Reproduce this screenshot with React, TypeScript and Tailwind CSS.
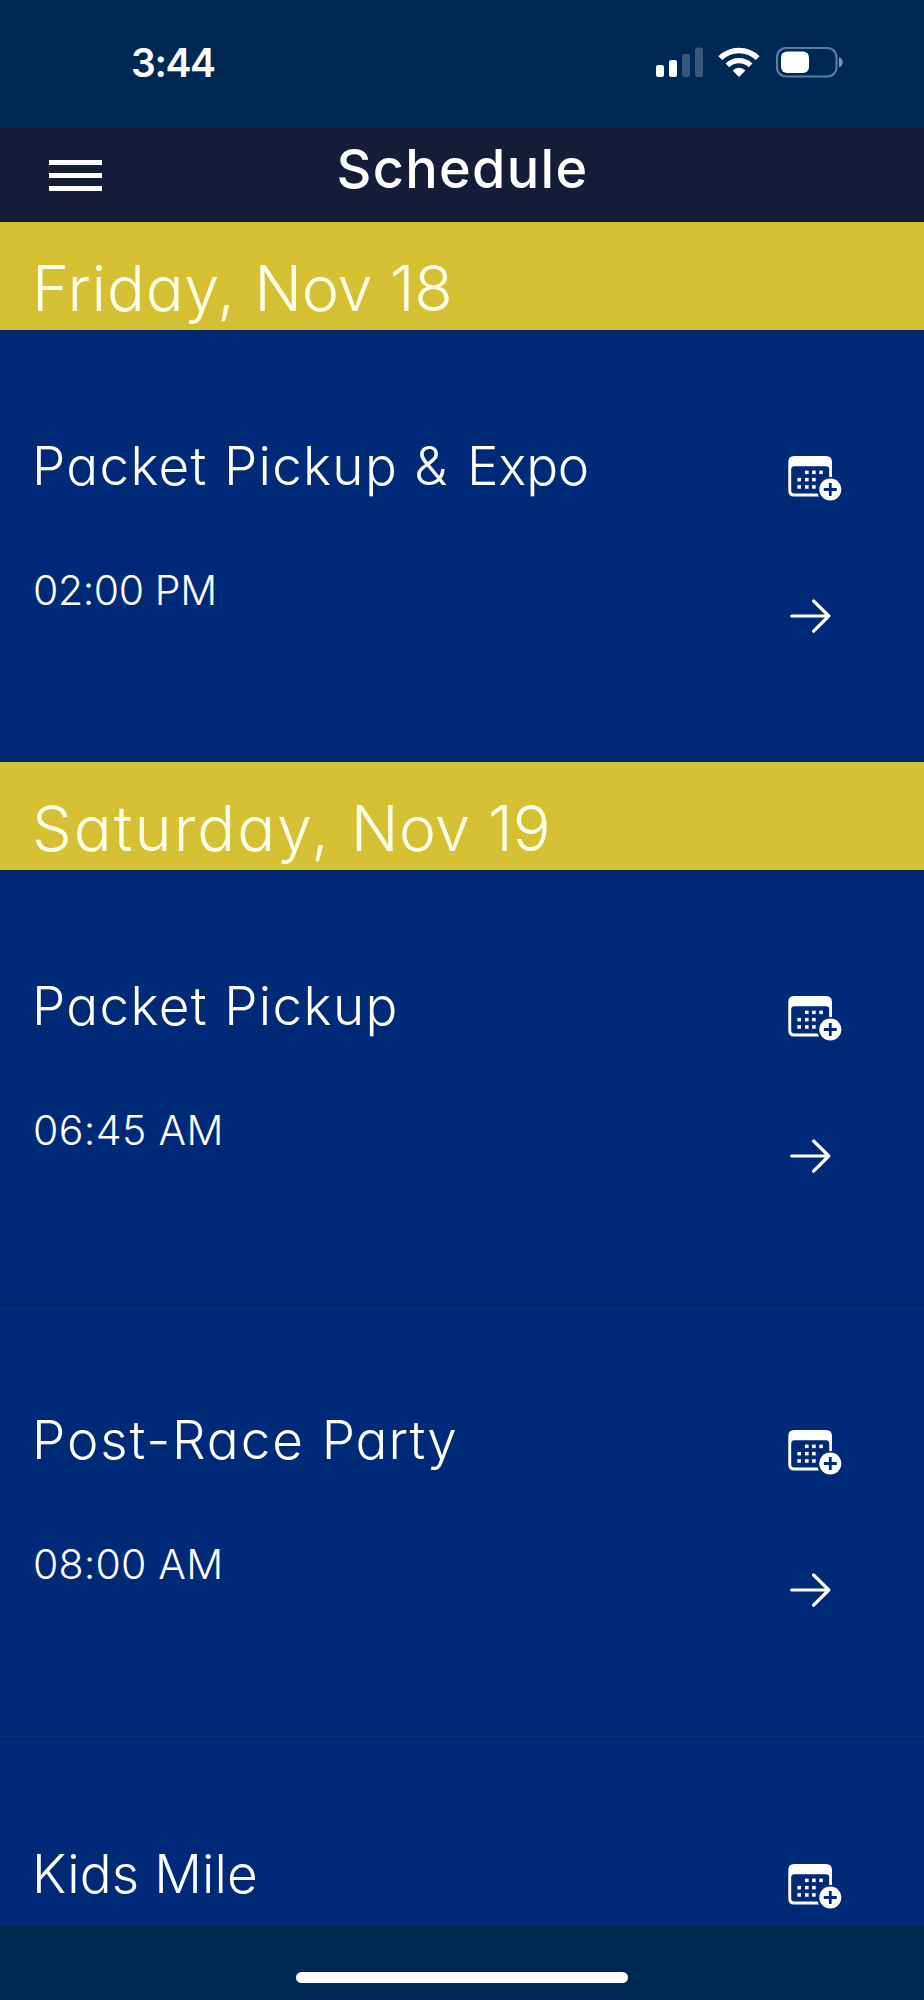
type Word = { text: string; spacing: string };

type ScheduleEvent = {
  name: Word[];
  time?: Word;
};

type ScheduleDay = {
  label: Word[];
  events: ScheduleEvent[];
};

const days: ScheduleDay[] = [
  {
    label: [
      { text: "Friday, ", spacing: "tracking-[0.7px]" },
      { text: "Nov 18", spacing: "tracking-[-0.3px]" },
    ],
    events: [
      {
        name: [
          { text: "Packet Pickup ", spacing: "tracking-[1.3px]" },
          { text: "& ", spacing: "tracking-[2.4px]" },
          { text: "Expo", spacing: "tracking-[-0.3px]" },
        ],
        time: { text: "02:00 PM", spacing: "tracking-[-0.4px]" },
      },
    ],
  },
  {
    label: [
      { text: "Saturday, ", spacing: "tracking-[2px]" },
      { text: "Nov 19", spacing: "tracking-[0.1px]" },
    ],
    events: [
      {
        name: [{ text: "Packet Pickup", spacing: "tracking-[1.35px]" }],
        time: { text: "06:45 AM", spacing: "tracking-[0.4px]" },
      },
      {
        name: [
          { text: "Post-Race ", spacing: "tracking-[1.9px]" },
          { text: "Party", spacing: "tracking-[1px]" },
        ],
        time: { text: "08:00 AM", spacing: "tracking-[0.2px]" },
      },
      {
        name: [{ text: "Kids Mile", spacing: "tracking-[0.1px]" }],
      },
    ],
  },
];

function Words({ words }: { words: Word[] }) {
  return (
    <>
      {words.map((word) => (
        <span key={word.text} className={word.spacing}>
          {word.text}
        </span>
      ))}
    </>
  );
}

function SignalIcon() {
  return (
    <svg width="48" height="32" viewBox="0 0 48 32" fill="#fff">
      <rect x="0" y="18" width="8" height="12" rx="2.2" />
      <rect x="13" y="13" width="8" height="17" rx="2.2" />
      <rect x="26" y="7" width="8" height="23" rx="2.2" opacity="0.22" />
      <rect x="39" y="0.5" width="8" height="29.5" rx="2.2" opacity="0.22" />
    </svg>
  );
}

function WifiIcon() {
  return (
    <svg width="42" height="32" viewBox="0 0 42 32" fill="none">
      <path d="M2.3 11.2 A26.5 26.5 0 0 1 39.7 11.2" stroke="#fff" strokeWidth="5.4" />
      <path d="M9.4 18.3 A16.5 16.5 0 0 1 32.6 18.3" stroke="#fff" strokeWidth="5.2" />
      <path d="M14.6 23.4 A9 9 0 0 1 27.4 23.4 L21 30 Z" fill="#fff" />
    </svg>
  );
}

function BatteryIcon() {
  return (
    <svg width="68" height="32" viewBox="0 0 68 32" fill="none">
      <rect x="1" y="1" width="59.5" height="28.5" rx="9" stroke="#5f7ba3" strokeWidth="2.2" />
      <rect x="5" y="4.5" width="28" height="21.5" rx="6" fill="#fff" />
      <path d="M63 10.3 C68 12 68 18.7 63 20.3 Z" fill="#8094b3" />
    </svg>
  );
}

function CalendarPlusIcon() {
  return (
    <svg width="54" height="46" viewBox="0 0 54 46" fill="none">
      <path
        fillRule="evenodd"
        fill="#fff"
        d="M6 0 H38 Q44 0 44 6 V21 H41.2 V13.5 Q41.2 10.3 38 10.3 H6.4 Q3.2 10.3 3.2 13.5 V34.5 Q3.2 37.5 6.4 37.5 H29.8 Q30.3 39.5 31 40.6 H6 Q0.3 40.6 0.3 34.5 V6 Q0.3 0 6 0 Z"
      />
      <g fill="#fff">
        <rect x="17" y="14.6" width="3.6" height="3.5" />
        <rect x="24.1" y="14.6" width="3.6" height="3.5" />
        <rect x="31.3" y="14.6" width="3.6" height="3.5" />
        <rect x="9.4" y="21.9" width="3.6" height="3.5" />
        <rect x="17" y="21.9" width="3.6" height="3.5" />
        <rect x="24.1" y="21.9" width="3.6" height="3.5" />
        <rect x="9.4" y="29.2" width="3.6" height="3.5" />
        <rect x="17" y="29.2" width="3.6" height="3.5" />
        <rect x="24.1" y="29.2" width="3.6" height="3.5" />
      </g>
      <circle cx="42.3" cy="33.5" r="11" fill="#fff" />
      <path d="M42.3 27 V40 M35.8 33.5 H48.8" stroke="#002a78" strokeWidth="2.8" />
    </svg>
  );
}

function ArrowIcon() {
  return (
    <svg
      width="42"
      height="34"
      viewBox="0 0 42 34"
      fill="none"
      stroke="#fff"
      strokeWidth="3.2"
      strokeLinecap="round"
      strokeLinejoin="round"
    >
      <path d="M1.8 17 H38.8 M23.6 2 L38.8 17 L23.6 32.2" />
    </svg>
  );
}

function EventRow({ event, className }: { event: ScheduleEvent; className: string }) {
  return (
    <li className={`flex justify-between items-start pl-[32px] pr-[82px] border-t-2 ${className}`}>
      <div className="pt-[102px] text-white font-[360]">
        <h3 className="text-[53px] leading-[64px] whitespace-pre">
          <Words words={event.name} />
        </h3>
        {event.time && (
          <p className="mt-[68px] pl-[1px] text-[41px] leading-[48px] whitespace-pre">
            <Words words={[event.time]} />
          </p>
        )}
      </div>
      <div className="w-[54px] pt-[124px] flex flex-col items-start">
        <button>
          <CalendarPlusIcon />
        </button>
        <button className="mt-[97px] ml-[2px]">
          <ArrowIcon />
        </button>
      </div>
    </li>
  );
}

export default function App() {
  return (
    <div className="w-[924px] h-[2000px] flex flex-col overflow-hidden bg-[#002a78] font-['Inter',sans-serif] [font-feature-settings:'cv11']">
      <div className="h-[127px] shrink-0 flex justify-between items-start bg-[#002855] pl-[131px] pr-[80px] pt-[39px]">
        <span className="text-[39px] leading-[48px] font-semibold tracking-[-1.4px] text-white">3:44</span>
        <div className="flex pt-[8px]">
          <SignalIcon />
          <div className="ml-[14px]">
            <WifiIcon />
          </div>
          <div className="ml-[16px]">
            <BatteryIcon />
          </div>
        </div>
      </div>

      <header className="h-[95px] shrink-0 grid grid-cols-[1fr_auto_1fr] items-start bg-[#141c38]">
        <button className="ml-[49px] mt-[33px] w-[53px] flex flex-col gap-[8px]">
          <span className="h-[5px] w-full bg-white" />
          <span className="h-[5px] w-full bg-white" />
          <span className="h-[5px] w-full bg-white" />
        </button>
        <h1 className="pt-[10px] pl-[1px] text-[54px] leading-[64px] font-medium tracking-[1.3px] text-white">
          Schedule
        </h1>
      </header>

      <main className="h-[1704px] shrink-0 overflow-hidden">
        {days.map((day) => (
          <section key={day.label[0].text}>
            <h2 className="h-[108px] pl-[32px] pt-[34px] bg-[#d5bf32] text-[#fffee8] text-[63px] leading-[64px] font-[360] whitespace-pre">
              <Words words={day.label} />
            </h2>
            <ul>
              {day.events.map((event, i) => (
                <EventRow
                  key={i}
                  event={event}
                  className={
                    i > 0
                      ? "h-[434px] border-[#012463]"
                      : day.events.length > 1
                        ? "h-[434px] border-transparent"
                        : "h-[432px] border-transparent"
                  }
                />
              ))}
            </ul>
          </section>
        ))}
      </main>

      <div className="h-[74px] shrink-0 flex justify-center items-start bg-[#002855] pt-[46px]">
        <div className="w-[332px] h-[11px] rounded-full bg-white" />
      </div>
    </div>
  );
}
